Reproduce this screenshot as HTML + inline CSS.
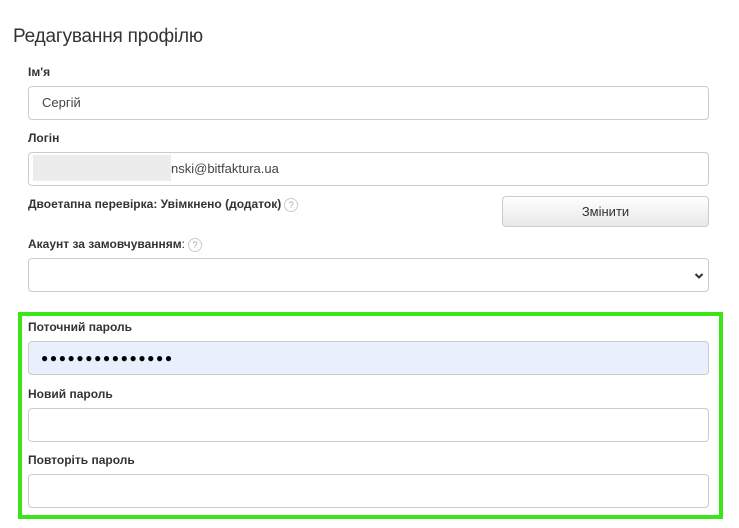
<!DOCTYPE html>
<html><head><meta charset="utf-8"><style>
*{box-sizing:border-box;margin:0;padding:0}
body{width:739px;height:528px;background:#fff;font-family:"Liberation Sans",Arial,sans-serif;color:#333;position:relative;overflow:hidden}
.a{position:absolute}
h1{position:absolute;left:13px;top:26px;font-size:19px;font-weight:normal;color:#333;letter-spacing:-0.2px}
.l{position:absolute;left:28px;font-size:12px;font-weight:bold;color:#333}
.in{position:absolute;left:28px;width:681px;height:34px;border:1px solid #ccc;border-radius:4px;background:#fff;font-size:13px;padding-left:13px;line-height:32px;color:#444}
.q{display:inline-block;width:14px;height:14px;border:1px solid #ccc;border-radius:50%;font-size:9px;color:#aaa;text-align:center;line-height:12px;font-weight:normal;vertical-align:middle;margin-left:3px}
.btn{position:absolute;left:502px;top:196px;width:207px;height:31px;border:1px solid #ccc;border-radius:4px;background:linear-gradient(#fff,#e8e8e8);font-size:13px;text-align:center;line-height:29px;color:#333}
.g{position:absolute;left:18px;top:312px;width:705px;height:207px;border:4px solid #3be617}
</style></head><body>
<h1>Редагування профілю</h1>
<div class="l" style="top:65px">Ім'я</div>
<div class="in" style="top:86px">Сергій</div>
<div class="l" style="top:131px">Логін</div>
<div class="in" style="top:152px"><span class="a" style="left:4px;top:2px;width:138px;height:26px;background:#ececec"></span><span class="a" style="left:142px;top:0">nski@bitfaktura.ua</span></div>
<div class="l" style="top:197px">Двоетапна перевірка: Увімкнено (додаток)<span class="q">?</span></div>
<div class="btn">Змінити</div>
<div class="l" style="top:237px">Акаунт за замовчуванням<span style="font-weight:normal">:</span><span class="q">?</span></div>
<div class="in" style="top:258px"><svg class="a" style="left:665px;top:13px" width="10" height="8" viewBox="0 0 10 8"><path d="M1.5 2l3.5 3.5L8.5 2" stroke="#333" stroke-width="2" fill="none"/></svg></div>
<div class="g"></div>
<div class="l" style="top:320px">Поточний пароль</div>
<div class="in" style="top:341px;background:#e8f0fe;font-size:12px;letter-spacing:1.6px;color:#000;padding-left:12px">●●●●●●●●●●●●●●●</div>
<div class="l" style="top:387px">Новий пароль</div>
<div class="in" style="top:408px"></div>
<div class="l" style="top:453px">Повторіть пароль</div>
<div class="in" style="top:474px"></div>
</body></html>
